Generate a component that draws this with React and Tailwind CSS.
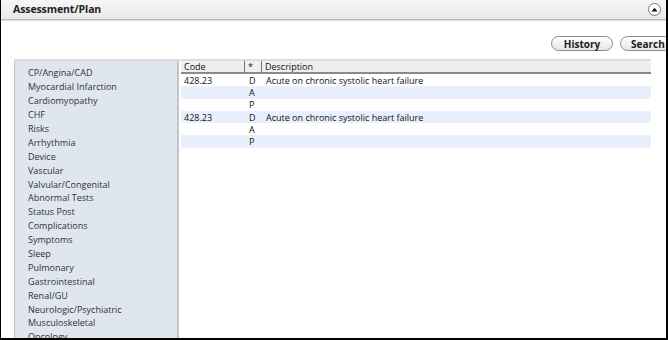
const CATEGORIES = [
  "CP/Angina/CAD",
  "Myocardial Infarction",
  "Cardiomyopathy",
  "CHF",
  "Risks",
  "Arrhythmia",
  "Device",
  "Vascular",
  "Valvular/Congenital",
  "Abnormal Tests",
  "Status Post",
  "Complications",
  "Symptoms",
  "Sleep",
  "Pulmonary",
  "Gastrointestinal",
  "Renal/GU",
  "Neurologic/Psychiatric",
  "Musculoskeletal",
  "Oncology",
];

const ROWS = [
  { code: "428.23", flag: "D", desc: "Acute on chronic systolic heart failure" },
  { code: "", flag: "A", desc: "" },
  { code: "", flag: "P", desc: "" },
  { code: "428.23", flag: "D", desc: "Acute on chronic systolic heart failure" },
  { code: "", flag: "A", desc: "" },
  { code: "", flag: "P", desc: "" },
];

function PillButton({ children, className = "" }) {
  return (
    <button
      className={
        "h-[15px] rounded-full border border-[#8a8a8a] bg-gradient-to-b from-white to-[#e6e6e6] text-[10px] font-bold leading-none text-[#222] " +
        className
      }
    >
      {children}
    </button>
  );
}

export default function App() {
  return (
    <div
      className="w-[668px] h-[340px] overflow-hidden bg-white border-l border-r-2 border-b-2 border-black flex flex-col"
      style={{ fontFamily: '"Open Sans", "Noto Sans", sans-serif' }}
    >
      {/* title bar */}
      <div className="h-[20px] shrink-0 flex items-center justify-between pl-[12px] pr-[5px] bg-gradient-to-b from-[#f6f6f6] to-[#e9e9e9] border-b border-[#b8b8b8] shadow-[0_1px_1px_rgba(0,0,0,0.12)]">
        <span className="text-[10.5px] font-bold text-[#222] tracking-[-0.1px]">Assessment/Plan</span>
        <span className="w-[13px] h-[13px] rounded-full border border-[#777] bg-white flex items-center justify-center">
          <svg width="7" height="5" viewBox="0 0 7 5">
            <path d="M0.5 4.5 L3.5 0.8 L6.5 4.5 Z" fill="#111" />
          </svg>
        </span>
      </div>

      {/* toolbar */}
      <div className="h-[39px] shrink-0 flex items-end justify-end gap-[7px] pb-[8px] -mr-[6px]">
        <PillButton className="w-[62px]">History</PillButton>
        <PillButton className="w-[52px] text-left pl-[10px]">Search</PillButton>
      </div>

      {/* content */}
      <div className="flex-1 ml-[13px] w-[637px] border-t-2 border-[#dcdcdc] flex text-[9px] leading-none">
        <ul className="w-[165px] shrink-0 bg-[#dfe6ef] border-l border-[#c2c2c2] border-r-2 border-r-[#c4c4c4] pt-[5px] pl-[13px] text-[#333]">
          {CATEGORIES.map((c) => (
            <li key={c} className="h-[13.9px] flex items-center whitespace-nowrap">
              {c}
            </li>
          ))}
        </ul>

        <div className="flex-1 ml-[2px] text-[#111]">
          <div className="h-[13px] flex items-center bg-[#efefef] border-b-2 border-[#8a8a8a]">
            <div className="w-[64px] h-full pl-[3px] flex items-center border-r border-[#777]">Code</div>
            <div className="w-[17px] h-full pl-[3px] flex items-center border-r border-[#777]">*</div>
            <div className="pl-[3px]">Description</div>
          </div>
          {ROWS.map((r, i) => (
            <div
              key={i}
              className={"h-[12.3px] flex items-center " + (i % 2 === 1 ? "bg-[#e9f0fc]" : "bg-white")}
            >
              <div className="w-[64px] pl-[3px]">{r.code}</div>
              <div className="w-[17px] pl-[4px]">{r.flag}</div>
              <div className="pl-[4px]">{r.desc}</div>
            </div>
          ))}
        </div>
      </div>
    </div>
  );
}
